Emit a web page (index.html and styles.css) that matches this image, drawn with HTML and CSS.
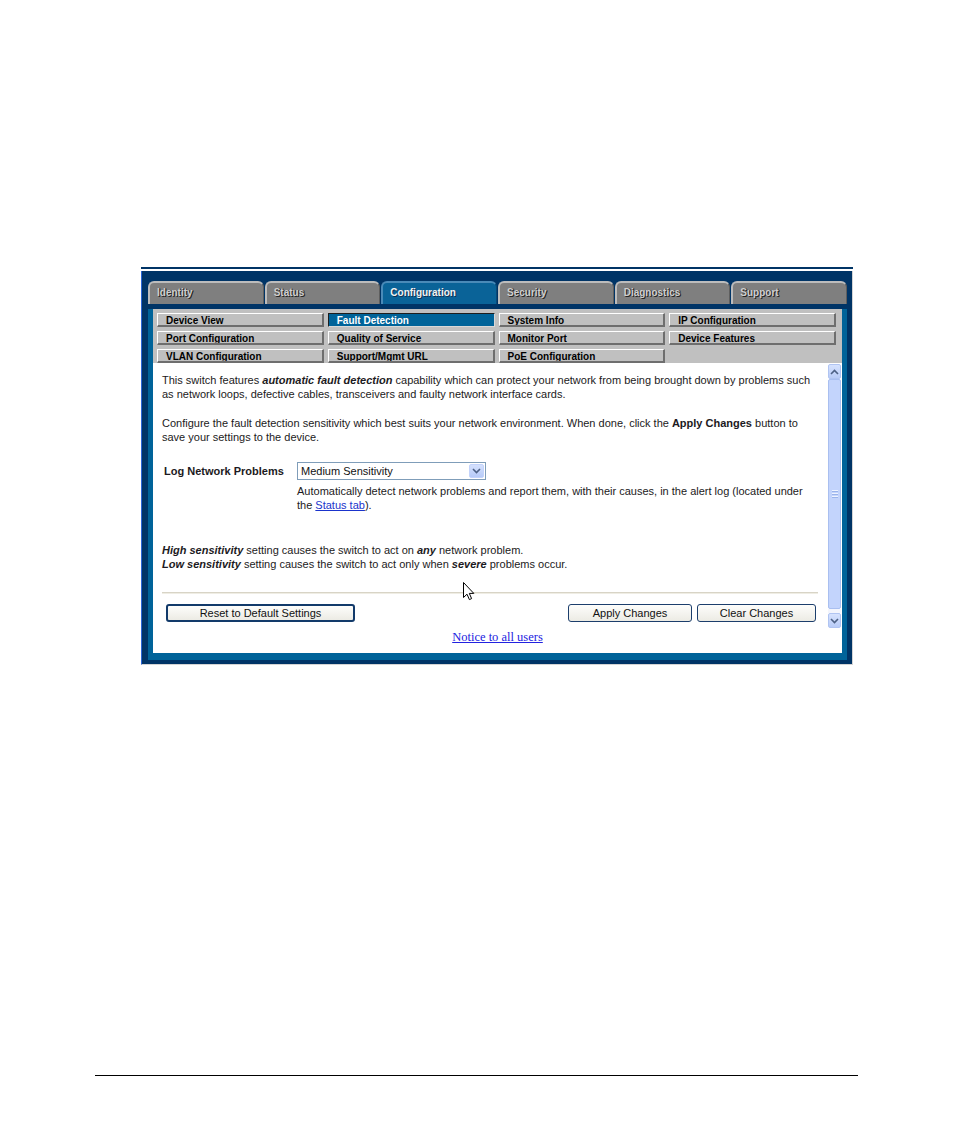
FILE: index.html
```html
<!DOCTYPE html>
<html>
<head>
<meta charset="utf-8">
<link rel="stylesheet" href="styles.css">
</head>
<body>
<div class="page">
  <div class="shot">
    <div class="topline"></div>
    <div class="frame">
      <div class="tabs">
        <div class="tab">Identity</div>
        <div class="tab">Status</div>
        <div class="tab active">Configuration</div>
        <div class="tab">Security</div>
        <div class="tab">Diagnostics</div>
        <div class="tab">Support</div>
      </div>
      <div class="panel">
        <div class="subnav">
          <div class="sbtn">Device View</div>
          <div class="sbtn on">Fault Detection</div>
          <div class="sbtn">System Info</div>
          <div class="sbtn">IP Configuration</div>
          <div class="sbtn">Port Configuration</div>
          <div class="sbtn">Quality of Service</div>
          <div class="sbtn">Monitor Port</div>
          <div class="sbtn">Device Features</div>
          <div class="sbtn">VLAN Configuration</div>
          <div class="sbtn">Support/Mgmt URL</div>
          <div class="sbtn">PoE Configuration</div>
          <div class="sempty"></div>
        </div>
        <div class="content">
          <div class="scrollwrap">
            <div class="scrollbody">
              <p class="p1">This switch features <b><i>automatic fault detection</i></b> capability which can protect your network from being brought down by problems such<br>as network loops, defective cables, transceivers and faulty network interface cards.</p>
              <p class="p2">Configure the fault detection sensitivity which best suits your network environment. When done, click the <b>Apply Changes</b> button to<br>save your settings to the device.</p>
              <div class="logrow">
                <div class="loglabel">Log Network Problems</div>
                <div class="select">
                  <span class="seltext">Medium Sensitivity</span>
                  <span class="selarrow"><svg width="9" height="6" viewBox="0 0 9 6"><polyline points="1,1 4.5,4.5 8,1" fill="none" stroke="#4d6185" stroke-width="1.6"/></svg></span>
                </div>
              </div>
              <p class="desc">Automatically detect network problems and report them, with their causes, in the alert log (located under<br>the <a class="lnk" href="#">Status tab</a>).</p>
              <p class="sens"><b><i>High sensitivity</i></b> setting causes the switch to act on <b><i>any</i></b> network problem.<br><b><i>Low sensitivity</i></b> setting causes the switch to act only when <b><i>severe</i></b> problems occur.</p>
              <div class="rule"></div>
              <div class="btnrow">
                <div class="btn reset">Reset to Default Settings</div>
                <div class="spacer"></div>
                <div class="btn apply">Apply Changes</div>
                <div class="btn clear">Clear Changes</div>
              </div>
            </div>
            <div class="scrollbar">
              <div class="sbarrow"><svg width="9" height="6" viewBox="0 0 9 6"><polyline points="1,5 4.5,1.5 8,5" fill="none" stroke="#4d6185" stroke-width="1.6"/></svg></div>
              <div class="sbthumb"><span class="grip"></span><span class="grip"></span><span class="grip"></span></div>
              <div class="sbtrack"></div>
              <div class="sbarrow"><svg width="9" height="6" viewBox="0 0 9 6"><polyline points="1,1 4.5,4.5 8,1" fill="none" stroke="#4d6185" stroke-width="1.6"/></svg></div>
            </div>
          </div>
          <div class="notice"><a href="#" class="noticelnk">Notice to all users</a></div>
          <svg class="cursor" width="12" height="19" viewBox="0 0 12 19"><path d="M0.5,0.5 L0.5,15.5 L4,12.2 L6.4,17.6 L8.6,16.6 L6.3,11.4 L10.8,11.4 Z" fill="#fff" stroke="#000" stroke-width="1" stroke-linejoin="miter"/></svg>
        </div>
      </div>
    </div>
  </div>
  <div class="footrule"></div>
</div>
</body>
</html>
```

FILE: styles.css
```css
html, body {
  margin: 0;
  padding: 0;
  background: #fff;
}
body {
  font-family: "Liberation Sans", Arial, sans-serif;
}
.page {
  width: 954px;
}
.shot {
  margin: 267px 0 0 141px;
  width: 713px;
}
.topline {
  width: 712px;
  height: 2px;
  background: #003466;
  margin-bottom: 2px;
}
.frame {
  width: 699px;
  background: #003466;
  border-left: 1px solid #2a66d6;
  border-right: 1px solid #d4d4d4;
  border-bottom: 1px solid #d4d4d4;
  padding: 10px 5px 4px 6px;
}
.tabs {
  display: grid;
  grid-template-columns: repeat(6, 1fr);
  column-gap: 1px;
  height: 23px;
  margin-bottom: 5px;
}
.tab {
  box-sizing: border-box;
  background: #7f7f7f;
  border-top: 2px solid #bcbcbc;
  border-left: 2px solid #bcbcbc;
  border-right: 1px solid #5e5e5e;
  border-radius: 6px 6px 0 0;
  color: #cfcfcf;
  font-weight: bold;
  font-size: 10px;
  line-height: 20px;
  padding-left: 7px;
  text-shadow: 1px 1px 0 #262626, 1px 0 0 #3a3a3a;
}
.tab.active {
  background: #0a6398;
  border-top-color: #4a8ab8;
  border-left-color: #4a8ab8;
  border-right-color: #0a4a78;
  color: #f2f2f2;
  text-shadow: 1px 1px 0 #123050;
}
.panel {
  background: #006399;
  padding: 0 5px 7px 5px;
}
.subnav {
  box-sizing: border-box;
  background: #c0c0c0;
  height: 54px;
  padding: 4px 6px 0 4px;
  display: grid;
  grid-template-columns: repeat(4, 1fr);
  grid-auto-rows: 14px;
  gap: 4px;
  overflow: hidden;
}
.sbtn {
  box-sizing: border-box;
  border-top: 1px solid #ffffff;
  border-left: 1px solid #ffffff;
  border-right: 2px solid #6e6e6e;
  border-bottom: 2px solid #6e6e6e;
  font-weight: bold;
  font-size: 10px;
  line-height: 13px;
  padding-left: 8px;
  color: #000;
  white-space: nowrap;
  overflow: hidden;
}
.sbtn.on {
  background: #006399;
  color: #fff;
  border-top: 1px solid #1e1e1e;
  border-left: 1px solid #1e1e1e;
  border-right: 1px solid #d8d8d8;
  border-bottom: 1px solid #d8d8d8;
  line-height: 13px;
}
.content {
  position: relative;
  background: #fff;
  height: 290px;
}
.scrollwrap {
  display: flex;
  height: 265px;
}
.scrollbody {
  flex: 1;
  padding: 10px 10px 0 9px;
  font-size: 11px;
  color: #1c1a22;
  overflow: hidden;
}
.scrollbody p {
  margin: 0;
}
.p1 {
  line-height: 13.5px;
  padding-top: 1px;
}
.p2 {
  line-height: 13.5px;
  margin-top: 16px !important;
}
.logrow {
  display: flex;
  align-items: center;
  margin-top: 18px;
  height: 18px;
}
.loglabel {
  box-sizing: border-box;
  width: 135px;
  padding-left: 2px;
  font-weight: bold;
}
.select {
  box-sizing: border-box;
  width: 189px;
  height: 18px;
  border: 1px solid #7f9db9;
  display: flex;
  align-items: center;
  justify-content: space-between;
  padding-left: 3px;
  padding-right: 1px;
}
.seltext {
  color: #111;
}
.selarrow {
  box-sizing: border-box;
  width: 15px;
  height: 14px;
  background: linear-gradient(#d4e0fd, #b7cbf8);
  border: 1px solid #c3d3fb;
  border-radius: 2px;
  display: flex;
  align-items: center;
  justify-content: center;
}
.desc {
  line-height: 14px;
  margin: 4px 0 0 135px !important;
}
.lnk {
  color: #1a33cc;
  text-decoration: underline;
}
.sens {
  line-height: 14px;
  margin-top: 31px !important;
}
.rule {
  margin-top: 21px;
  border-top: 1px solid #d8d4c6;
  border-bottom: 1px solid #efede4;
}
.btnrow {
  display: flex;
  margin-top: 10px;
  padding: 0 2px 0 4px;
  gap: 5px;
}
.spacer {
  flex: 1;
}
.btn {
  box-sizing: border-box;
  height: 18px;
  border: 1px solid #1c3e6c;
  border-radius: 3px;
  background: linear-gradient(#fdfdfb, #ecebe4);
  font-size: 11px;
  line-height: 16px;
  text-align: center;
  color: #111;
}
.reset {
  width: 189px;
  border: 2px solid #123a6a;
  line-height: 14px;
}
.apply {
  width: 124px;
}
.clear {
  width: 119px;
}
.scrollbar {
  width: 13px;
  margin-right: 1px;
  display: flex;
  flex-direction: column;
  padding-top: 1px;
  box-sizing: border-box;
}
.sbarrow {
  box-sizing: border-box;
  height: 15px;
  background: linear-gradient(#d6e2fe, #b9ccf7);
  border: 1px solid #b0c4f2;
  border-radius: 2px;
  display: flex;
  align-items: center;
  justify-content: center;
}
.sbthumb {
  box-sizing: border-box;
  height: 230px;
  background: #c3d4fc;
  border: 1px solid #a9bff0;
  border-radius: 2px;
  display: flex;
  flex-direction: column;
  align-items: center;
  justify-content: center;
  gap: 1px;
}
.grip {
  width: 6px;
  height: 1px;
  background: #eef3ff;
  border-bottom: 1px solid #9ab3ea;
}
.sbtrack {
  height: 4px;
  background: #f3f5fd;
}
.notice {
  text-align: center;
  padding-top: 2px;
  font-family: "Liberation Serif", "Times New Roman", serif;
  font-size: 12.5px;
  line-height: 15px;
}
.noticelnk {
  color: #2222e0;
  text-decoration: underline;
}
.cursor {
  position: absolute;
  left: 310px;
  top: 219px;
}
.footrule {
  margin: 410px 0 0 95px;
  width: 763px;
  height: 1px;
  background: #000;
}
```
